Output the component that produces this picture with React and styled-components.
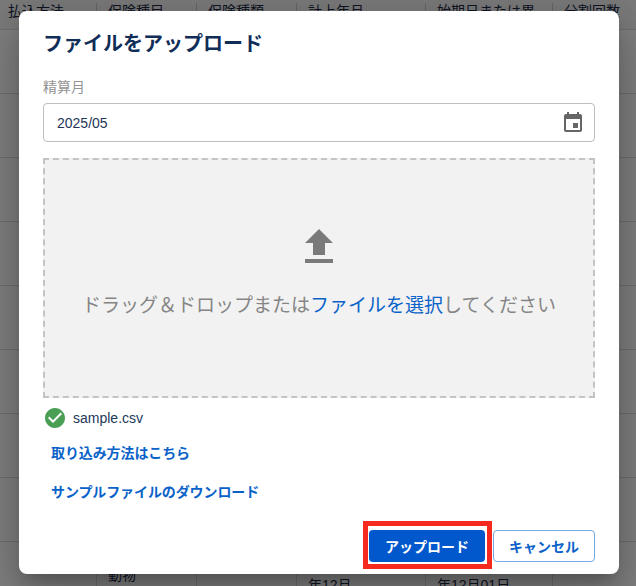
import React from "react";
import styled, { createGlobalStyle } from "styled-components";

const Global = createGlobalStyle`
  html, body { margin: 0; padding: 0; height: 586px; overflow: hidden; background: #fff; }
  * { box-sizing: border-box; }
  body { font-family: "Liberation Sans", "Noto Sans CJK JP", sans-serif; }
`;

const Page = styled.div`
  position: relative;
  width: 636px;
  height: 586px;
  overflow: hidden;
`;

const Table = styled.div`
  display: flex;
  flex-direction: column;
  color: #1d2b45;
  font-size: 14px;
`;

const HeadRow = styled.div`
  display: grid;
  grid-template-columns: 97px 100px 100px 129px 127px 83px;
  height: 30px;
  border-bottom: 1px solid #ddd;
  background: #f4f4f4;
`;

const HeadCell = styled.div`
  position: relative;
  padding: 1px 0 0 ${(p) => (p.$first ? 8 : 11)}px;
  line-height: 20px;
  white-space: nowrap;
  overflow: hidden;
  &::after {
    content: "";
    display: ${(p) => (p.$last ? "none" : "block")};
    position: absolute;
    right: 0;
    top: 3px;
    height: 14px;
    width: 1px;
    background: #ccc;
  }
`;

const BodyRow = styled.div`
  display: grid;
  grid-template-columns: 97px 100px 100px 129px 127px 83px;
  height: 64px;
  border-bottom: 1px solid #ddd;
`;

const BodyCell = styled.div`
  padding: ${(p) => p.$top || 0}px 0 0 11px;
  line-height: 20px;
  white-space: nowrap;
  border-right: ${(p) => (p.$last ? "none" : "1px solid #ddd")};
`;

const Overlay = styled.div`
  position: absolute;
  inset: 0;
  background: rgba(0, 0, 0, 0.5);
  display: flex;
  align-items: flex-start;
  justify-content: center;
  padding: 11px 17px 0 19px;
`;

const Modal = styled.div`
  width: 600px;
  height: 563px;
  background: #fff;
  border-radius: 8px;
  padding: 17px 24px 12px;
  display: flex;
  flex-direction: column;
  box-shadow: 0 11px 15px -7px rgba(0, 0, 0, 0.2), 0 24px 38px 3px rgba(0, 0, 0, 0.14),
    0 9px 46px 8px rgba(0, 0, 0, 0.12);
`;

const Title = styled.h2`
  margin: 0;
  font-size: 20px;
  line-height: 32px;
  font-weight: 700;
  color: #0f2d57;
`;

const Label = styled.div`
  margin-top: 17px;
  font-size: 14px;
  line-height: 20px;
  color: #949494;
`;

const InputBox = styled.div`
  margin-top: 6px;
  height: 39px;
  border: 1px solid #bdbdbd;
  border-radius: 4px;
  padding: 0 9px 0 13px;
  display: flex;
  align-items: center;
  justify-content: space-between;
  font-size: 14px;
  color: #1e3557;
`;

const CalendarIcon = styled.svg`
  width: 24px;
  height: 24px;
  fill: #666;
`;

const DropZone = styled.div`
  margin-top: 16px;
  height: 240px;
  flex: none;
  border: 2px dashed #c4c4c4;
  background: #f2f2f2;
  display: flex;
  flex-direction: column;
  align-items: center;
  padding-top: 63px;
`;

const UploadIcon = styled.svg`
  width: 48px;
  height: 48px;
  fill: #7a7a7a;
`;

const DropText = styled.div`
  margin-top: 21px;
  font-size: 19px;
  line-height: 28px;
  white-space: nowrap;
  color: #858585;
`;

const SelectLink = styled.span`
  color: #0a62c9;
`;

const FileRow = styled.div`
  margin-top: 8px;
  height: 24px;
  display: flex;
  align-items: center;
  gap: 6px;
  font-size: 14px;
  color: #23395b;
`;

const CheckIcon = styled.svg`
  width: 24px;
  height: 24px;
  fill: #4a9f55;
`;

const HelpLink = styled.a`
  margin: ${(p) => p.$gap}px 0 0 8px;
  font-size: 14px;
  letter-spacing: -0.1px;
  line-height: 20px;
  font-weight: 700;
  color: #0a62c9;
`;

const Footer = styled.div`
  margin-top: auto;
  display: flex;
  justify-content: flex-end;
  gap: 8px;
`;

const PrimaryButton = styled.button`
  position: relative;
  width: 116px;
  height: 32px;
  border: none;
  border-radius: 4px;
  background: #0058cc;
  color: #fff;
  font: 700 14px "Liberation Sans", "Noto Sans CJK JP", sans-serif;
  &::after {
    content: "";
    position: absolute;
    inset: -9px -7px -7px -6px;
    border: 5px solid #f5291e;
  }
`;

const GhostButton = styled.button`
  width: 102px;
  height: 32px;
  border: 1px solid #79a9e6;
  border-radius: 4px;
  background: #fff;
  color: #0a62c9;
  font: 700 14px "Liberation Sans", "Noto Sans CJK JP", sans-serif;
`;

const heads = ["払込方法", "保険種目", "保険種類", "計上年月", "始期日または異", "分割回数"];

export default function App() {
  return (
    <Page>
      <Global />
      <Table>
        <HeadRow>
          {heads.map((h, i) => (
            <HeadCell key={h} $first={i === 0} $last={i === heads.length - 1}>
              {h}
            </HeadCell>
          ))}
        </HeadRow>
        {[0, 1, 2, 3, 4, 5, 6, 7].map((r) => (
          <BodyRow key={r}>
            {[0, 1, 2, 3, 4, 5].map((c) => (
              <BodyCell key={c} $last={c === 5} />
            ))}
          </BodyRow>
        ))}
        <BodyRow>
          <BodyCell />
          <BodyCell $top={23}>動物</BodyCell>
          <BodyCell />
          <BodyCell $top={33}>年12月</BodyCell>
          <BodyCell $top={33}>年12月01日</BodyCell>
          <BodyCell $last />
        </BodyRow>
      </Table>
      <Overlay>
        <Modal>
          <Title>ファイルをアップロード</Title>
          <Label>精算月</Label>
          <InputBox>
            2025/05
            <CalendarIcon viewBox="0 0 24 24">
              <path d="M17 12h-5v5h5v-5zM16 1v2H8V1H6v2H5c-1.11 0-1.99.9-1.99 2L3 19c0 1.1.89 2 2 2h14c1.1 0 2-.9 2-2V5c0-1.1-.9-2-2-2h-1V1h-2zm3 18H5V8h14v11z" />
            </CalendarIcon>
          </InputBox>
          <DropZone>
            <UploadIcon viewBox="0 0 24 24">
              <path d="M9 16h6v-6h4l-7-7-7 7h4zm-4 2h14v2H5z" />
            </UploadIcon>
            <DropText>
              ドラッグ＆ドロップまたは<SelectLink>ファイルを選択</SelectLink>してください
            </DropText>
          </DropZone>
          <FileRow>
            <CheckIcon viewBox="0 0 24 24">
              <path d="M12 2C6.48 2 2 6.48 2 12s4.48 10 10 10 10-4.48 10-10S17.52 2 12 2zm-2 15l-5-5 1.41-1.41L10 14.17l7.59-7.59L19 8l-9 9z" />
            </CheckIcon>
            sample.csv
          </FileRow>
          <HelpLink $gap={13}>取り込み方法はこちら</HelpLink>
          <HelpLink $gap={19}>サンプルファイルのダウンロード</HelpLink>
          <Footer>
            <PrimaryButton>アップロード</PrimaryButton>
            <GhostButton>キャンセル</GhostButton>
          </Footer>
        </Modal>
      </Overlay>
    </Page>
  );
}
